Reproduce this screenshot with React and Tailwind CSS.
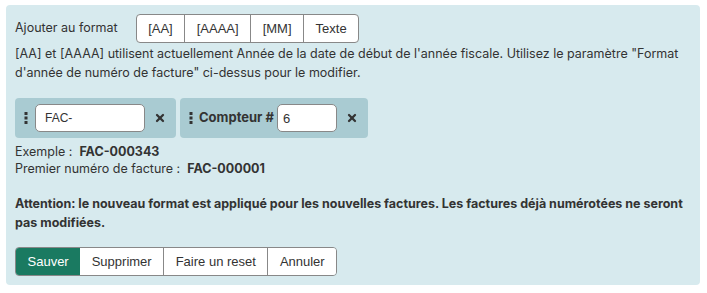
import { X } from "lucide-react";

const FORMAT_TAGS = ["[AA]", "[AAAA]", "[MM]", "Texte"];
const ACTIONS = ["Sauver", "Supprimer", "Faire un reset", "Annuler"];

const btnFont = { fontFamily: '"Liberation Sans", Arial, sans-serif' };

/* ── drag handle ── */
const Grip = () => (
  <svg width="4" height="12" viewBox="0 0 4 12" className="shrink-0">
    <rect x="0.5" y="0" width="3" height="3" fill="#333" />
    <rect x="0.5" y="4.5" width="3" height="3" fill="#333" />
    <rect x="0.5" y="9" width="3" height="3" fill="#333" />
  </svg>
);

const Remove = () => (
  <button className="shrink-0 text-[#333] cursor-pointer">
    <X size={12} strokeWidth={4.5} />
  </button>
);

export default function App() {
  return (
    <div
      className="bg-white w-[707px] h-[293px] pt-[5px] pl-[6px] text-[#333]"
      style={{ fontFamily: "Inter, 'Noto Sans', sans-serif" }}
    >
      <div className="w-[694px] h-[280px] bg-[#d7eaee] rounded-[4px] pl-[9px] pr-3 pt-[9px]">
        {/* ── FORMAT TAGS ── */}
        <div className="flex items-center gap-[18px]">
          <span className="text-[12.5px]">Ajouter au format</span>
          <div className="flex border border-[#888] rounded-[4px] bg-white overflow-hidden h-[29px]">
            {FORMAT_TAGS.map((t, i) => (
              <button
                key={t}
                style={btnFont}
                className={`px-[11.5px] text-[13px] text-[#333] ${
                  i > 0 ? "border-l border-[#888]" : ""
                }`}
              >
                {t}
              </button>
            ))}
          </div>
        </div>

        <p className="text-[12.5px] leading-[19px] mt-[1px]">
          [AA] et [AAAA] utilisent actuellement Année de la date de début de l'année fiscale. Utilisez le
          paramètre "Format d'année de numéro de facture" ci-dessus pour le modifier.
        </p>

        {/* ── TOKENS ── */}
        <div className="flex gap-1 mt-[16px]">
          <div className="flex items-center h-10 w-[161px] bg-[#a9cbd2] rounded-[4px] pl-[9px] pr-[10px]">
            <Grip />
            <input
              defaultValue="FAC-"
              style={btnFont}
              className="ml-[7px] w-[110px] h-[28px] bg-white border border-[#888] rounded-[5px] px-[9px] text-[12px] text-[#333] outline-none"
            />
            <div className="ml-auto">
              <Remove />
            </div>
          </div>
          <div className="flex items-center h-10 w-[188px] bg-[#a9cbd2] rounded-[4px] pl-[9px] pr-[10px]">
            <Grip />
            <span className="ml-[6px] text-[13px] font-bold whitespace-nowrap">Compteur #</span>
            <input
              defaultValue="6"
              style={btnFont}
              className="ml-[3px] w-[60px] h-[28px] bg-white border border-[#888] rounded-[5px] px-[5px] text-[13px] text-[#333] outline-none"
            />
            <div className="ml-auto">
              <Remove />
            </div>
          </div>
        </div>

        {/* ── EXAMPLE ── */}
        <div className="mt-[5px] text-[12.5px] leading-[17px]">
          <p>
            Exemple :&nbsp; <span className="font-bold">FAC-000343</span>
          </p>
          <p>
            Premier numéro de facture :&nbsp; <span className="font-bold">FAC-000001</span>
          </p>
        </div>

        <p className="mt-[17px] text-[12.5px] leading-[19px] font-bold">
          Attention: le nouveau format est appliqué pour les nouvelles factures. Les factures déjà
          numérotées ne seront pas modifiées.
        </p>

        {/* ── ACTIONS ── */}
        <div className="mt-[15px] flex w-fit border border-[#888] rounded-[4px] overflow-hidden h-[29px]">
          {ACTIONS.map((a, i) => (
            <button
              key={a}
              style={btnFont}
              className={`px-[11.5px] text-[13px] ${
                i === 0
                  ? "bg-[#1a7a61] text-white border-0"
                  : "bg-white text-[#333] border-l border-[#888]"
              } ${i === 1 ? "border-l-0" : ""}`}
            >
              {a}
            </button>
          ))}
        </div>
      </div>
    </div>
  );
}
